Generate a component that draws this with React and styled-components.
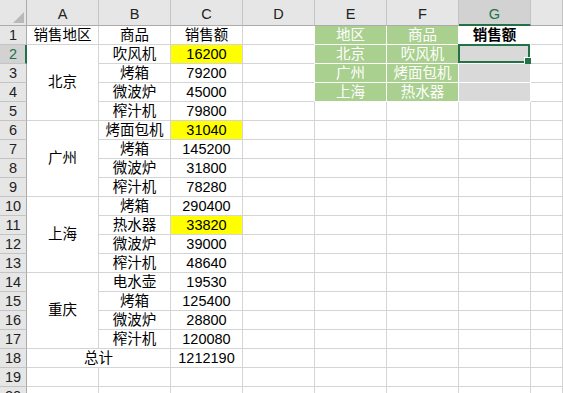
import React from 'react';
import styled, { createGlobalStyle } from 'styled-components';

const GREEN = '#217346';
const GRID = '#d4d4d4';

const GlobalStyle = createGlobalStyle`
    html, body {
        margin: 0;
        padding: 0;
        background: #fff;
    }
    body {
        font-family: "Liberation Sans", "Noto Sans CJK SC", sans-serif;
    }
`;

const Sheet = styled.div`
    display: grid;
    grid-template-columns: 27px repeat(7, 72px) 1fr;
    grid-template-rows: 26px repeat(20, 19px);
    width: 563px;
    height: 393px;
    overflow: hidden;
    background: #fff;
`;

const Corner = styled.div`
    grid-column: 1;
    grid-row: 1;
    box-sizing: border-box;
    background: #e6e6e6;
    border-right: 1px solid #ababab;
    border-bottom: 1px solid #ababab;
    position: relative;

    &::after {
        content: '';
        position: absolute;
        right: 2px;
        bottom: 2px;
        width: 0;
        height: 0;
        border-left: 11px solid transparent;
        border-bottom: 11px solid #b9b9b9;
    }
`;

const ColHead = styled.div`
    grid-column: ${p => p.$col};
    grid-row: 1;
    box-sizing: border-box;
    background: ${p => (p.$active ? '#d2d2d2' : '#e6e6e6')};
    color: ${p => (p.$active ? GREEN : '#222')};
    border-right: 1px solid #c4c4c4;
    border-bottom: ${p => (p.$active ? `2px solid ${GREEN}` : '1px solid #ababab')};
    font-size: 14.5px;
    line-height: 17px;
    display: flex;
    justify-content: center;
    align-items: flex-end;
    padding-bottom: ${p => (p.$active ? '1px' : '2px')};
`;

const RowHead = styled.div`
    grid-column: 1;
    grid-row: ${p => p.$row};
    box-sizing: border-box;
    background: ${p => (p.$active ? '#d2d2d2' : '#e6e6e6')};
    color: ${p => (p.$active ? GREEN : '#222')};
    border-right: ${p => (p.$active ? `2px solid ${GREEN}` : '1px solid #ababab')};
    border-bottom: 1px solid #c4c4c4;
    font-size: 14.5px;
    line-height: 17px;
    display: flex;
    justify-content: center;
    align-items: flex-end;
    padding-left: ${p => (p.$active ? '1px' : '0')};
`;

const Cell = styled.div`
    grid-column: ${p => p.$col} / span ${p => p.$colSpan || 1};
    grid-row: ${p => p.$row} / span ${p => p.$rowSpan || 1};
    box-sizing: border-box;
    border-right: 1px solid ${p => p.$rightLine || GRID};
    border-bottom: 1px solid ${p => p.$bottomLine || GRID};
    background: ${p => p.$fill || '#fff'};
    color: ${p => p.$ink || '#000'};
    font-weight: ${p => (p.$bold ? 700 : 400)};
    font-size: 14.5px;
    line-height: 17px;
    display: flex;
    justify-content: center;
    align-items: ${p => (p.$rowSpan > 1 ? 'center' : 'flex-end')};
    white-space: nowrap;
    position: relative;
`;

const Selection = styled.div`
    position: absolute;
    top: -1px;
    left: -1px;
    right: 0;
    bottom: 0;
    border: 2px solid ${GREEN};
    box-sizing: border-box;
    pointer-events: none;
`;

const FillHandle = styled.div`
    position: absolute;
    right: -3px;
    bottom: -3px;
    width: 6px;
    height: 6px;
    background: ${GREEN};
    box-shadow: -1px -1px 0 0 #fff;
`;

const COLS = ['A', 'B', 'C', 'D', 'E', 'F', 'G', 'H'];
const YELLOW = '#ffff00';
const LEAF = '#a9d08e';
const GREY = '#d9d9d9';

// sheet rows: [product, amount, highlighted]
const products = [
    ['吹风机', '16200', true],
    ['烤箱', '79200'],
    ['微波炉', '45000'],
    ['榨汁机', '79800'],
    ['烤面包机', '31040', true],
    ['烤箱', '145200'],
    ['微波炉', '31800'],
    ['榨汁机', '78280'],
    ['烤箱', '290400'],
    ['热水器', '33820', true],
    ['微波炉', '39000'],
    ['榨汁机', '48640'],
    ['电水壶', '19530'],
    ['烤箱', '125400'],
    ['微波炉', '28800'],
    ['榨汁机', '120080'],
];

const regions = [
    ['北京', 2],
    ['广州', 6],
    ['上海', 10],
    ['重庆', 14],
];

const lookup = [
    ['地区', '商品'],
    ['北京', '吹风机'],
    ['广州', '烤面包机'],
    ['上海', '热水器'],
];

// grid row for sheet row n (row 1 of the grid is the header)
const gr = n => n + 1;
// grid col for letter index (col 1 of the grid is the row header)
const gc = i => i + 2;

const App = () => {
    const cells = [];

    // row 1 headings
    cells.push(<Cell key="a1" $col={gc(0)} $row={gr(1)}>销售地区</Cell>);
    cells.push(<Cell key="b1" $col={gc(1)} $row={gr(1)}>商品</Cell>);
    cells.push(<Cell key="c1" $col={gc(2)} $row={gr(1)}>销售额</Cell>);

    regions.forEach(([name, start]) => {
        cells.push(
            <Cell key={`r${start}`} $col={gc(0)} $row={gr(start)} $rowSpan={4}>
                {name}
            </Cell>
        );
    });

    products.forEach(([item, amount, hot], i) => {
        const r = i + 2;
        cells.push(<Cell key={`b${r}`} $col={gc(1)} $row={gr(r)}>{item}</Cell>);
        cells.push(
            <Cell key={`c${r}`} $col={gc(2)} $row={gr(r)} $fill={hot ? YELLOW : undefined}>
                {amount}
            </Cell>
        );
    });

    cells.push(<Cell key="a18" $col={gc(0)} $row={gr(18)} $colSpan={2}>总计</Cell>);
    cells.push(<Cell key="c18" $col={gc(2)} $row={gr(18)}>1212190</Cell>);

    for (let r = 19; r <= 20; r++) {
        for (let i = 0; i < 3; i++) {
            cells.push(<Cell key={`x${r}-${i}`} $col={gc(i)} $row={gr(r)} />);
        }
    }

    // right side: D..H
    for (let r = 1; r <= 20; r++) {
        const boxed = r <= 4;
        const last = r === 4;
        cells.push(
            <Cell key={`d${r}`} $col={gc(3)} $row={gr(r)} $rightLine={boxed ? '#fff' : undefined} />
        );
        if (boxed) {
            const [area, item] = lookup[r - 1];
            const bottom = last ? '#fff' : '#fff';
            cells.push(
                <Cell key={`e${r}`} $col={gc(4)} $row={gr(r)} $fill={LEAF} $ink="#fff" $rightLine="#fff" $bottomLine={bottom}>
                    {area}
                </Cell>
            );
            cells.push(
                <Cell key={`f${r}`} $col={gc(5)} $row={gr(r)} $fill={LEAF} $ink="#fff" $rightLine="#fff" $bottomLine={bottom}>
                    {item}
                </Cell>
            );
            cells.push(
                <Cell
                    key={`g${r}`}
                    $col={gc(6)}
                    $row={gr(r)}
                    $fill={r === 1 ? '#fff' : GREY}
                    $bold={r === 1}
                    $rightLine="#fff"
                    $bottomLine={bottom}
                >
                    {r === 1 ? '销售额' : null}
                    {r === 2 && (
                        <Selection>
                            <FillHandle />
                        </Selection>
                    )}
                </Cell>
            );
        } else {
            cells.push(<Cell key={`e${r}`} $col={gc(4)} $row={gr(r)} />);
            cells.push(<Cell key={`f${r}`} $col={gc(5)} $row={gr(r)} />);
            cells.push(<Cell key={`g${r}`} $col={gc(6)} $row={gr(r)} />);
        }
        cells.push(<Cell key={`h${r}`} $col={gc(7)} $row={gr(r)} />);
    }

    return (
        <>
            <GlobalStyle />
            <Sheet>
                <Corner />
                {COLS.map((c, i) => (
                    <ColHead key={c} $col={gc(i)} $active={c === 'G'}>
                        {c === 'H' ? '' : c}
                    </ColHead>
                ))}
                {Array.from({ length: 20 }, (_, i) => (
                    <RowHead key={i} $row={gr(i + 1)} $active={i + 1 === 2}>
                        {i + 1}
                    </RowHead>
                ))}
                {cells}
            </Sheet>
        </>
    );
};

export default App;
